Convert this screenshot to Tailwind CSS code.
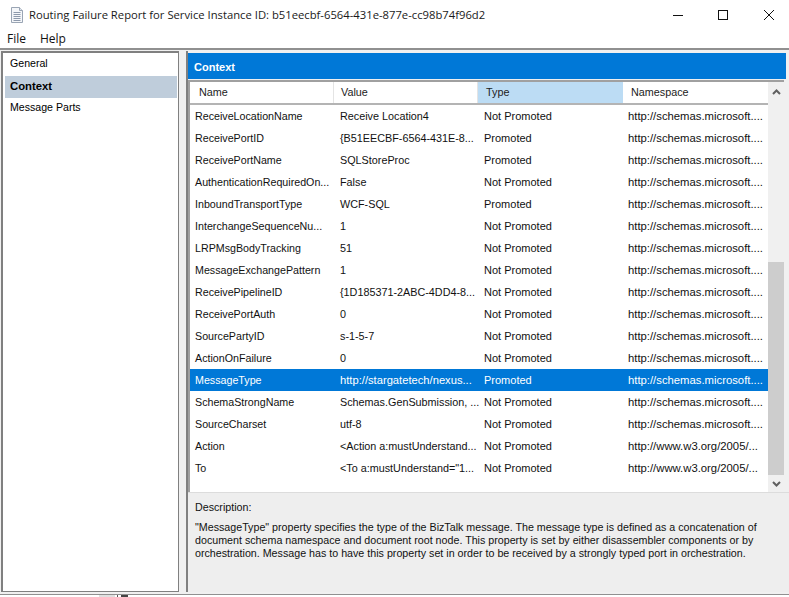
<!DOCTYPE html>
<html lang="en">
<head>
  <meta charset="UTF-8" />
  <title>Routing Failure Report</title>
  <script src="https://cdn.jsdelivr.net/npm/@tailwindcss/browser@4"></script>
</head>
<body class="w-[789px] h-[597px] overflow-hidden bg-white text-black font-['Liberation_Sans',sans-serif] text-[10.8px]">

  <!-- Title bar -->
  <div class="h-[30px] flex items-center pl-[9px]">
    <svg width="16" height="18" viewBox="0 0 16 18" class="shrink-0">
      <path d="M2.5 1.5h8l3 3v12h-11z" fill="#f4f6f9" stroke="#9aa5b4"/>
      <path d="M10.5 1.5v3h3" fill="#dfe5ec" stroke="#9aa5b4"/>
      <path d="M4.5 6.5h7M4.5 8.5h7M4.5 10.5h7M4.5 12.5h7M4.5 14.5h7" stroke="#8d99ab"/>
    </svg>
    <span class="ml-[4px] text-[11.25px] font-['Open_Sans',sans-serif] text-[#1a1a1a] whitespace-nowrap">Routing Failure Report for Service Instance ID: b51eecbf-6564-431e-877e-cc98b74f96d2</span>
    <div class="ml-auto flex items-center">
      <svg width="12" height="12" viewBox="0 0 12 12" class="mr-[33px]"><path d="M1 6.5h10" stroke="#111"/></svg>
      <svg width="12" height="12" viewBox="0 0 12 12" class="mr-[34px]"><rect x="1.5" y="1.5" width="9" height="9" fill="none" stroke="#111"/></svg>
      <svg width="12" height="12" viewBox="0 0 12 12" class="mr-[14px]"><path d="M1 1l10 10M11 1L1 11" stroke="#111"/></svg>
    </div>
  </div>

  <!-- Menu -->
  <div class="h-[18px] flex items-center gap-[14px] pl-[7px] text-[12px] font-['Open_Sans',sans-serif] text-[#111]">
    <span>File</span><span>Help</span>
  </div>

  <!-- Body -->
  <div class="h-[547px] border-t-2 border-b border-[#909090] bg-[#f0f0f0] flex">
    <!-- Tree -->
    <div class="w-[178px] h-[541px] mt-[1px] ml-[1px] border-l-2 border-t-2 border-r border-b border-[#808080] bg-white pt-[1px] pl-[2px] shrink-0 text-[10.6px]">
      <div class="h-[22px] pl-[5px] pb-[2px] flex items-center">General</div>
      <div class="h-[22px] pl-[5px] pb-[2px] flex items-center w-[172px] bg-[#bfcddb] font-bold text-[11.3px]">Context</div>
      <div class="h-[22px] pl-[5px] pb-[2px] flex items-center">Message Parts</div>
    </div>

    <!-- Right side -->
    <div class="ml-[7px] w-[603px] h-[541px] mt-[1px] flex flex-col border-l-2 border-[#808080]">
      <div class="h-[26px] mt-[2px] mr-[3px] bg-[#0078d7] text-white font-bold flex items-center pl-[6px] pt-[3px] text-[11px]">Context</div>

      <!-- List -->
      <div class="h-[412px] mt-[1px] border-l-2 border-t-2 border-[#a0a0a0] bg-white flex mr-[5px]">
        <div class="flex-1 min-w-0">
          <div class="h-[23px] flex border-b-2 border-[#b4b4b4] text-[#222]">
            <div class="w-[144px] pl-[9px] flex items-center border-r border-[#e4e4e4]">Name</div>
            <div class="w-[144px] pl-[7px] flex items-center border-r border-[#e4e4e4]">Value</div>
            <div class="w-[145px] pl-[8px] flex items-center bg-[#bcdcf4]">Type</div>
            <div class="flex-1 pl-[8px] flex items-center">Namespace</div>
          </div>
          <div class="whitespace-nowrap text-[#111]">
            <div class="h-[22px] flex items-center"><span class="w-[145px] pl-[5px] text-[10.7px]">ReceiveLocationName</span><span class="w-[144px] pl-[5px]">Receive Location4</span><span class="w-[144px] pl-[5px] text-[11px]">Not Promoted</span><span class="pl-[5px] text-[11.3px]">http://schemas.microsoft....</span></div>
            <div class="h-[22px] flex items-center"><span class="w-[145px] pl-[5px] text-[10.7px]">ReceivePortID</span><span class="w-[144px] pl-[5px]">{B51EECBF-6564-431E-8...</span><span class="w-[144px] pl-[5px] text-[11px]">Promoted</span><span class="pl-[5px] text-[11.3px]">http://schemas.microsoft....</span></div>
            <div class="h-[22px] flex items-center"><span class="w-[145px] pl-[5px] text-[10.7px]">ReceivePortName</span><span class="w-[144px] pl-[5px]">SQLStoreProc</span><span class="w-[144px] pl-[5px] text-[11px]">Promoted</span><span class="pl-[5px] text-[11.3px]">http://schemas.microsoft....</span></div>
            <div class="h-[22px] flex items-center"><span class="w-[145px] pl-[5px] text-[10.7px]">AuthenticationRequiredOn...</span><span class="w-[144px] pl-[5px]">False</span><span class="w-[144px] pl-[5px] text-[11px]">Not Promoted</span><span class="pl-[5px] text-[11.3px]">http://schemas.microsoft....</span></div>
            <div class="h-[22px] flex items-center"><span class="w-[145px] pl-[5px] text-[10.7px]">InboundTransportType</span><span class="w-[144px] pl-[5px]">WCF-SQL</span><span class="w-[144px] pl-[5px] text-[11px]">Promoted</span><span class="pl-[5px] text-[11.3px]">http://schemas.microsoft....</span></div>
            <div class="h-[22px] flex items-center"><span class="w-[145px] pl-[5px] text-[10.7px]">InterchangeSequenceNu...</span><span class="w-[144px] pl-[5px]">1</span><span class="w-[144px] pl-[5px] text-[11px]">Not Promoted</span><span class="pl-[5px] text-[11.3px]">http://schemas.microsoft....</span></div>
            <div class="h-[22px] flex items-center"><span class="w-[145px] pl-[5px] text-[10.7px]">LRPMsgBodyTracking</span><span class="w-[144px] pl-[5px]">51</span><span class="w-[144px] pl-[5px] text-[11px]">Not Promoted</span><span class="pl-[5px] text-[11.3px]">http://schemas.microsoft....</span></div>
            <div class="h-[22px] flex items-center"><span class="w-[145px] pl-[5px] text-[10.7px]">MessageExchangePattern</span><span class="w-[144px] pl-[5px]">1</span><span class="w-[144px] pl-[5px] text-[11px]">Not Promoted</span><span class="pl-[5px] text-[11.3px]">http://schemas.microsoft....</span></div>
            <div class="h-[22px] flex items-center"><span class="w-[145px] pl-[5px] text-[10.7px]">ReceivePipelineID</span><span class="w-[144px] pl-[5px]">{1D185371-2ABC-4DD4-8...</span><span class="w-[144px] pl-[5px] text-[11px]">Not Promoted</span><span class="pl-[5px] text-[11.3px]">http://schemas.microsoft....</span></div>
            <div class="h-[22px] flex items-center"><span class="w-[145px] pl-[5px] text-[10.7px]">ReceivePortAuth</span><span class="w-[144px] pl-[5px]">0</span><span class="w-[144px] pl-[5px] text-[11px]">Not Promoted</span><span class="pl-[5px] text-[11.3px]">http://schemas.microsoft....</span></div>
            <div class="h-[22px] flex items-center"><span class="w-[145px] pl-[5px] text-[10.7px]">SourcePartyID</span><span class="w-[144px] pl-[5px]">s-1-5-7</span><span class="w-[144px] pl-[5px] text-[11px]">Not Promoted</span><span class="pl-[5px] text-[11.3px]">http://schemas.microsoft....</span></div>
            <div class="h-[22px] flex items-center"><span class="w-[145px] pl-[5px] text-[10.7px]">ActionOnFailure</span><span class="w-[144px] pl-[5px]">0</span><span class="w-[144px] pl-[5px] text-[11px]">Not Promoted</span><span class="pl-[5px] text-[11.3px]">http://schemas.microsoft....</span></div>
            <div class="h-[22px] flex items-center bg-[#0078d7] text-white"><span class="w-[145px] pl-[5px] text-[10.7px]">MessageType</span><span class="w-[144px] pl-[5px] text-[11.2px]">http://stargatetech/nexus...</span><span class="w-[144px] pl-[5px] text-[11px]">Promoted</span><span class="pl-[5px] text-[11.3px]">http://schemas.microsoft....</span></div>
            <div class="h-[22px] flex items-center"><span class="w-[145px] pl-[5px] text-[10.7px]">SchemaStrongName</span><span class="w-[144px] pl-[5px]">Schemas.GenSubmission, ...</span><span class="w-[144px] pl-[5px] text-[11px]">Not Promoted</span><span class="pl-[5px] text-[11.3px]">http://schemas.microsoft....</span></div>
            <div class="h-[22px] flex items-center"><span class="w-[145px] pl-[5px] text-[10.7px]">SourceCharset</span><span class="w-[144px] pl-[5px]">utf-8</span><span class="w-[144px] pl-[5px] text-[11px]">Not Promoted</span><span class="pl-[5px] text-[11.3px]">http://schemas.microsoft....</span></div>
            <div class="h-[22px] flex items-center"><span class="w-[145px] pl-[5px] text-[10.7px]">Action</span><span class="w-[144px] pl-[5px]">&lt;Action a:mustUnderstand...</span><span class="w-[144px] pl-[5px] text-[11px]">Not Promoted</span><span class="pl-[5px] text-[11.3px]">http://www.w3.org/2005/...</span></div>
            <div class="h-[22px] flex items-center"><span class="w-[145px] pl-[5px] text-[10.7px]">To</span><span class="w-[144px] pl-[5px]">&lt;To a:mustUnderstand="1...</span><span class="w-[144px] pl-[5px] text-[11px]">Not Promoted</span><span class="pl-[5px] text-[11.3px]">http://www.w3.org/2005/...</span></div>
          </div>
        </div>
        <!-- Scrollbar -->
        <div class="w-[16px] bg-[#f0f0f0] flex flex-col shrink-0">
          <div class="h-[20px] flex items-center justify-center">
            <svg width="9" height="6" viewBox="0 0 9 6"><path d="M1 5l3.5-3.5L8 5" fill="none" stroke="#606060" stroke-width="2"/></svg>
          </div>
          <div class="h-[160px]"></div>
          <div class="flex-1 bg-[#cdcdcd]"></div>
          <div class="h-[17px] flex items-center justify-center">
            <svg width="9" height="6" viewBox="0 0 9 6"><path d="M1 1l3.5 3.5L8 1" fill="none" stroke="#606060" stroke-width="2"/></svg>
          </div>
        </div>
      </div>

      <!-- Description -->
      <div class="flex-1 border-t border-[#dcdcdc] bg-[#eeeeee] pl-[7px] pt-[6px] text-[#111] text-[10.7px]">
        <div>Description:</div>
        <p class="mt-[6px] w-[570px] leading-[13px]">"MessageType" property specifies the type of the BizTalk message. The message type is defined as a concatenation of document schema namespace and document root node. This property is set by either disassembler components or by orchestration. Message has to have this property set in order to be received by a strongly typed port in orchestration.</p>
      </div>
    </div>
  </div>

  <!-- Sliver of what lies behind the window -->
  <div class="h-[2px] flex">
    <div class="ml-[99px] w-[16px] bg-[#e0e0e0]"></div>
    <div class="ml-[2px] w-[1px] bg-[#555555]"></div>
    <div class="ml-[3px] w-[7px] bg-[#444444]"></div>
  </div>
</body>
</html>
